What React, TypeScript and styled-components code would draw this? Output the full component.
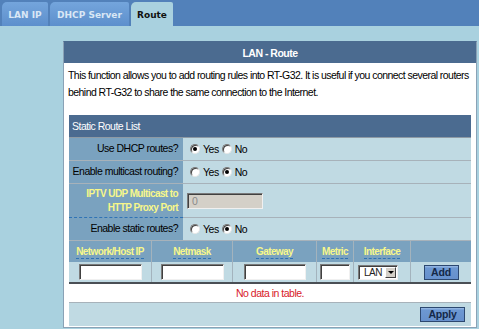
import React from "react";
import styled, { createGlobalStyle } from "styled-components";

const Global = createGlobalStyle`
  html, body { margin: 0; padding: 0; background: #a9d1df; }
  body { font-family: "Liberation Sans", Arial, sans-serif; font-size: 10.5px; letter-spacing: -0.5px; color: #000; }
  * { box-sizing: border-box; }
`;

const TopBar = styled.div`
  height: 26px;
  background: #5281ba;
  display: flex;
  align-items: flex-end;
  padding-left: 2px;
  gap: 2px;
`;

const Tab = styled.div<{ $active?: boolean; $w: number }>`
  width: ${(p) => p.$w}px;
  height: 24px;
  display: flex;
  align-items: center;
  justify-content: center;
  padding-top: 2px;
  font-family: "DejaVu Sans", Verdana, sans-serif;
  font-weight: bold;
  font-size: 9px;
  letter-spacing: 0;
  color: ${(p) => (p.$active ? "#111" : "#d9e7f5")};
  background: ${(p) => (p.$active ? "#a9d1df" : "linear-gradient(#74a5dc, #5d8fcc)")};
  border-top-left-radius: 5px;
  border-top-right-radius: 2px;
`;

const Content = styled.div`
  padding: 15px 0 0 63px;
`;

const Panel = styled.div`
  width: 414px;
  background: #fff;
  border: 1px solid #8aa2b6;
  border-top-color: #4b6b90;
`;

const PanelHeader = styled.div`
  height: 21px;
  background: #4b6b90;
  color: #fff;
  font-weight: bold;
  display: flex;
  align-items: center;
  justify-content: center;
`;

const Desc = styled.div`
  padding: 4px 0 14px 4px;
  line-height: 17px;
  height: 52px;
  letter-spacing: -0.55px;
`;

const Table = styled.div`
  margin: 0 5px 1px 5px;
  width: 402px;
`;

const SectionHeader = styled.div`
  height: 23px;
  background: #4b6b90;
  color: #fff;
  display: flex;
  align-items: center;
  padding-left: 3px;
  border-bottom: 1px solid #8e9aa4;
`;

const FieldRow = styled.div<{ $h: number }>`
  display: grid;
  grid-template-columns: 114px 1fr;
  height: ${(p) => p.$h}px;
  border-bottom: 1px solid #a7b2ba;
`;

const Label = styled.div<{ $accent?: boolean; $dashed?: boolean }>`
  background: #7aa2bf;
  display: flex;
  flex-direction: column;
  align-items: flex-end;
  justify-content: center;
  padding-right: 5px;
  text-align: right;
  white-space: nowrap;
  line-height: 13.5px;
  color: ${(p) => (p.$accent ? "#f7f78a" : "#000")};
  font-weight: ${(p) => (p.$accent ? "bold" : "normal")};
  font-size: ${(p) => (p.$accent ? "10px" : "10.5px")};
  letter-spacing: ${(p) => (p.$accent ? "-0.6px" : "-0.5px")};
  margin-bottom: ${(p) => (p.$dashed ? "-1px" : "0")};
  border-bottom: ${(p) => (p.$dashed ? "1px dashed #2f73b5" : "none")};
`;

const Value = styled.div<{ $pad?: number }>`
  background: #c0dae3;
  display: flex;
  align-items: center;
  padding-left: ${(p) => p.$pad ?? 7}px;
`;

const RadioOpt = styled.label`
  display: inline-flex;
  align-items: center;
  margin-right: 3px;
`;

const RadioDot = styled.span<{ $on?: boolean }>`
  width: 10px;
  height: 10px;
  border-radius: 50%;
  background: #fff;
  border: 1px solid;
  border-color: #7a7a7a #e6e6e6 #e6e6e6 #7a7a7a;
  box-shadow: inset 1px 1px 0 #404040;
  display: inline-flex;
  align-items: center;
  justify-content: center;
  margin-right: 3px;
  &::after {
    content: "";
    width: 4px;
    height: 4px;
    border-radius: 50%;
    background: ${(p) => (p.$on ? "#000" : "transparent")};
  }
`;

const TextBox = styled.div<{ $w: number; $disabled?: boolean }>`
  width: ${(p) => p.$w}px;
  height: 16px;
  background: ${(p) => (p.$disabled ? "#d4d0c8" : "#fff")};
  border: 1px solid;
  border-color: #7a7a7a #f0f0f0 #f0f0f0 #7a7a7a;
  box-shadow: inset 1px 1px 0 #404040;
  color: #8a8a8a;
  line-height: 14px;
  padding-left: 4px;
`;

const GridRow = styled.div<{ $h: number; $head?: boolean }>`
  display: grid;
  grid-template-columns: 82px 81px 84px 37px 57px 61px;
  height: ${(p) => p.$h}px;
  background: ${(p) => (p.$head ? "#7aa2bf" : "#c0dae3")};
  border-bottom: ${(p) => (p.$head ? "none" : "2px solid #4a4f55")};
`;

const Cell = styled.div<{ $head?: boolean }>`
  display: flex;
  align-items: center;
  justify-content: center;
  & + & {
    border-left: 1px solid ${(p) => (p.$head ? "#9db9cc" : "#a3b3bd")};
  }
`;

const ColTitle = styled.span`
  color: #f7f78a;
  font-weight: bold;
  font-size: 10px;
  letter-spacing: -0.6px;
  white-space: nowrap;
  border-bottom: 1px dashed #2f73b5;
  line-height: 12px;
  margin-top: 2px;
`;

const SelectBox = styled.div`
  width: 40px;
  height: 15px;
  background: #fff;
  border: 1px solid;
  border-color: #7a7a7a #f0f0f0 #f0f0f0 #7a7a7a;
  box-shadow: inset 1px 1px 0 #404040;
  display: flex;
  align-items: center;
  justify-content: space-between;
  padding: 1px 1px 1px 5px;
  font-size: 10px;
  color: #222;
  margin-right: 8px;
`;

const SelectArrow = styled.span`
  width: 11px;
  height: 11px;
  background: #d4d0c8;
  border: 1px solid;
  border-color: #fff #404040 #404040 #fff;
  display: flex;
  align-items: center;
  justify-content: center;
  &::after {
    content: "";
    border-left: 3px solid transparent;
    border-right: 3px solid transparent;
    border-top: 3px solid #000;
  }
`;

const Button = styled.button<{ $w: number }>`
  width: ${(p) => p.$w}px;
  height: 15px;
  padding: 0;
  background: linear-gradient(#9cbde6 0, #6d98d2 2px, #6690cc 100%);
  border: 1px solid #2c4870;
  color: #142848;
  font-family: inherit;
  font-weight: bold;
  font-size: 10.5px;
  letter-spacing: -0.2px;
  line-height: 13px;
`;

const EmptyRow = styled.div`
  height: 19px;
  background: #fff;
  color: #d8202a;
  display: flex;
  align-items: center;
  justify-content: center;
  border-bottom: 1px solid #a7b2ba;
`;

const ApplyRow = styled.div`
  height: 23px;
  background: #c0dae3;
  display: flex;
  align-items: center;
  justify-content: flex-end;
  padding-right: 6px;
`;

const Radio = ({ on, label }: { on?: boolean; label: string }) => (
  <RadioOpt>
    <RadioDot $on={on} />
    {label}
  </RadioOpt>
);

export default function App() {
  return (
    <>
      <Global />
      <TopBar>
        <Tab $w={46}>LAN IP</Tab>
        <Tab $w={79}>DHCP Server</Tab>
        <Tab $w={42} $active>
          Route
        </Tab>
      </TopBar>
      <Content>
        <Panel>
          <PanelHeader>LAN - Route</PanelHeader>
          <Desc>
            This function allows you to add routing rules into RT-G32. It is useful if you connect several routers
            behind RT-G32 to share the same connection to the Internet.
          </Desc>
          <Table>
            <SectionHeader>Static Route List</SectionHeader>
            <FieldRow $h={23}>
              <Label>Use DHCP routes?</Label>
              <Value>
                <Radio on label="Yes" />
                <Radio label="No" />
              </Value>
            </FieldRow>
            <FieldRow $h={23}>
              <Label>Enable multicast routing?</Label>
              <Value>
                <Radio label="Yes" />
                <Radio on label="No" />
              </Value>
            </FieldRow>
            <FieldRow $h={34}>
              <Label $accent $dashed>
                <span>IPTV UDP Multicast to</span>
                <span>HTTP Proxy Port</span>
              </Label>
              <Value $pad={4}>
                <TextBox $w={76} $disabled>
                  0
                </TextBox>
              </Value>
            </FieldRow>
            <FieldRow $h={23}>
              <Label>Enable static routes?</Label>
              <Value>
                <Radio label="Yes" />
                <Radio on label="No" />
              </Value>
            </FieldRow>
            <GridRow $h={21} $head>
              <Cell $head><ColTitle>Network/Host IP</ColTitle></Cell>
              <Cell $head><ColTitle>Netmask</ColTitle></Cell>
              <Cell $head><ColTitle>Gateway</ColTitle></Cell>
              <Cell $head><ColTitle>Metric</ColTitle></Cell>
              <Cell $head><ColTitle>Interface</ColTitle></Cell>
              <Cell $head />
            </GridRow>
            <GridRow $h={22}>
              <Cell><TextBox $w={63} /></Cell>
              <Cell><TextBox $w={63} /></Cell>
              <Cell><TextBox $w={62} /></Cell>
              <Cell><TextBox $w={30} /></Cell>
              <Cell>
                <SelectBox>
                  LAN
                  <SelectArrow />
                </SelectBox>
              </Cell>
              <Cell>
                <Button $w={35}>Add</Button>
              </Cell>
            </GridRow>
            <EmptyRow>No data in table.</EmptyRow>
            <ApplyRow>
              <Button $w={45}>Apply</Button>
            </ApplyRow>
          </Table>
        </Panel>
      </Content>
    </>
  );
}
